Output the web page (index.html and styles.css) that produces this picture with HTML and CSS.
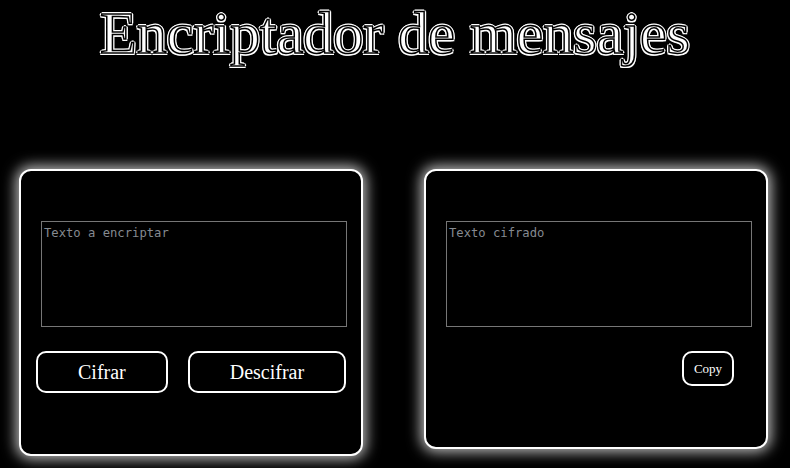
FILE: index.html
```html
<!DOCTYPE html>
<html lang="es">
<head>
<meta charset="utf-8">
<title>Encriptador de mensajes</title>
<link rel="stylesheet" href="styles.css">
</head>
<body>
<h1 class="title">Encriptador de mensajes</h1>
<main class="panels">
  <section class="card">
    <textarea class="field" placeholder="Texto a encriptar"></textarea>
    <div class="actions actions-left">
      <button class="btn btn-big">Cifrar</button>
      <button class="btn btn-big">Descifrar</button>
    </div>
  </section>
  <section class="card">
    <textarea class="field" placeholder="Texto cifrado"></textarea>
    <div class="actions actions-right">
      <button class="btn btn-small">Copy</button>
    </div>
  </section>
</main>
</body>
</html>
```
FILE: styles.css
```css
html, body {
  margin: 0;
  padding: 0;
  background: #000;
  height: 100%;
  overflow: hidden;
}

.title {
  margin: 0;
  font-family: "Liberation Serif", "Times New Roman", serif;
  font-weight: normal;
  font-size: 60px;
  line-height: 67px;
  text-align: center;
  color: #fff;
  -webkit-text-stroke: 1.5px #000;
  text-shadow:
    2px 0 0 #fff, -2px 0 0 #fff, 0 2px 0 #fff, 0 -2px 0 #fff,
    1.5px 1.5px 0 #fff, -1.5px -1.5px 0 #fff, 1.5px -1.5px 0 #fff, -1.5px 1.5px 0 #fff;
}

.panels {
  display: flex;
  align-items: flex-start;
  gap: 61px;
  margin-top: 102px;
  padding-left: 19px;
}

.card {
  box-sizing: border-box;
  width: 344px;
  border: 2px solid #fff;
  border-radius: 12px;
  padding: 50px 0 61px 20px;
  background: #000;
  box-shadow: 0 0 14px 3px rgba(255, 255, 255, 0.75);
}

.field {
  display: block;
  box-sizing: border-box;
  width: 306px;
  height: 106px;
  margin: 0;
  padding: 4px 2px 2px;
  border: 1px solid #767676;
  background: #000;
  color: #ddd;
  resize: none;
  outline: none;
  font-family: "DejaVu Sans Mono", "Liberation Mono", monospace;
  font-size: 12.2px;
  line-height: 15px;
}

.field::placeholder {
  color: #858a90;
}

.actions {
  display: flex;
  margin-top: 24px;
}

.actions-left {
  gap: 20px;
  margin-left: -5px;
}

.actions-right {
  justify-content: flex-end;
  padding-right: 32px;
}

.btn {
  box-sizing: border-box;
  margin: 0;
  background: #000;
  color: #fff;
  border: 2px solid #fff;
  border-radius: 10px;
  font-family: "Liberation Serif", "Times New Roman", serif;
  cursor: pointer;
}

.btn-big {
  height: 42px;
  padding: 0 40px;
  font-size: 20px;
}

.btn-small {
  width: 52px;
  height: 35px;
  padding: 0;
  font-size: 13px;
}
```
